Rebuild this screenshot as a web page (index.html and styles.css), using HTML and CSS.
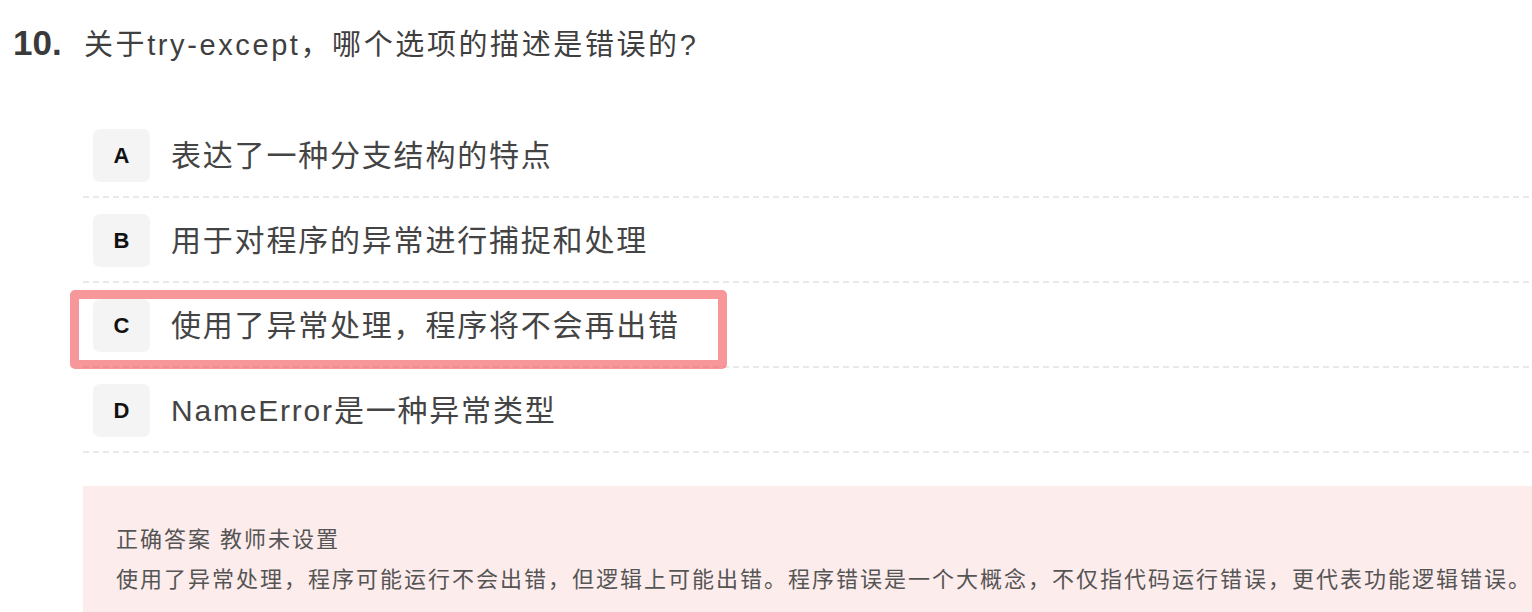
FILE: index.html
```html
<!doctype html>
<html lang="zh-CN">
	<head>
		<meta charset="utf-8">
		<title>第10题</title>
		<link rel="stylesheet" href="styles.css">
	</head>

	<body>
		<div class="question">
			<span class="question-num">10.</span>
			<span class="question-stem">关于try-except，哪个选项的描述是错误的?</span>
		</div>

		<ul class="options">
			<li class="option">
				<span class="option-key">A</span>
				<span class="option-label">表达了一种分支结构的特点</span>
			</li>
			<li class="option">
				<span class="option-key">B</span>
				<span class="option-label">用于对程序的异常进行捕捉和处理</span>
			</li>
			<li class="option option-marked">
				<span class="option-key">C</span>
				<span class="option-label">使用了异常处理，程序将不会再出错</span>
				<span class="mark"></span>
			</li>
			<li class="option">
				<span class="option-key">D</span>
				<span class="option-label">NameError是一种异常类型</span>
			</li>
		</ul>

		<div class="analysis">
			<p class="analysis-answer">正确答案 教师未设置</p>
			<p class="analysis-text">使用了异常处理，程序可能运行不会出错，但逻辑上可能出错。程序错误是一个大概念，不仅指代码运行错误，更代表功能逻辑错误。</p>
		</div>
	</body>
</html>
```

FILE: styles.css
```css
html, body {
	margin: 0;
	background: #fff;
}

body {
	font-family: "Liberation Sans", "Noto Sans CJK SC", sans-serif;
	color: #444;
	overflow: hidden;
}

.question {
	display: flex;
	align-items: baseline;
	padding: 21px 0 0 13px;
	line-height: 44px;
}

.question-num {
	font-size: 35px;
	font-weight: bold;
	color: #3a3a3a;
	width: 71px;
}

.question-stem {
	font-size: 29px;
	letter-spacing: 2.6px;
	color: #3f3f3f;
}

.options {
	list-style: none;
	margin: 46px 0 0 83px;
	padding: 0;
}

.option {
	position: relative;
	display: flex;
	align-items: center;
	padding: 16px 0 16px 10px;
	background-image: linear-gradient(to right, #e9e9e9 65%, transparent 65%);
	background-size: 10px 2px;
	background-repeat: repeat-x;
	background-position: left bottom;
}

.option-key {
	width: 57px;
	height: 53px;
	border-radius: 7px;
	background: #f4f4f4;
	display: flex;
	align-items: center;
	justify-content: center;
	font-size: 22px;
	font-weight: bold;
	color: #111;
}

.option-label {
	margin-left: 21px;
	font-size: 30px;
	letter-spacing: 1.8px;
	line-height: 40px;
	color: #444;
}

.mark {
	position: absolute;
	left: -13px;
	top: 7px;
	width: 639px;
	height: 61px;
	border: 9px solid rgba(242, 82, 87, 0.6);
	border-radius: 5px;
}

.analysis {
	margin: 33px 0 0 83px;
	padding: 39px 0 40px 33px;
	background: #fdecec;
	font-size: 22px;
	letter-spacing: 2px;
	line-height: 30px;
	color: #555;
}

.analysis p {
	margin: 0;
	white-space: nowrap;
}

.analysis-answer {
	margin-bottom: 10px !important;
}
```
